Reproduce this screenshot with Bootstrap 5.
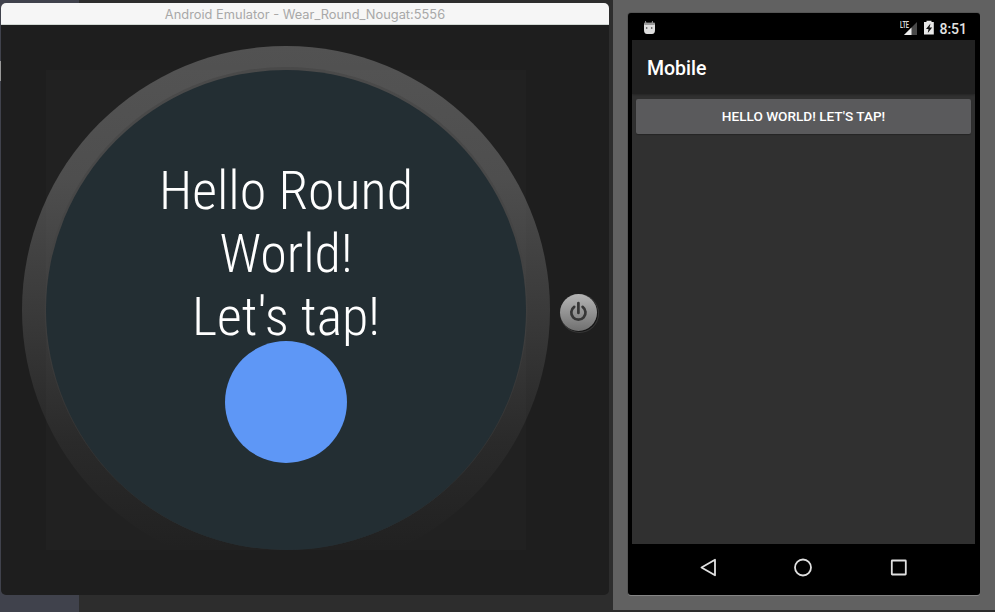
<!DOCTYPE html>
<html lang="en">
<head>
<meta charset="utf-8">
<meta name="viewport" content="width=device-width, initial-scale=1">
<title>Android Emulator - Wear_Round_Nougat:5556</title>
<link href="https://cdn.jsdelivr.net/npm/bootstrap@5.3.0/dist/css/bootstrap.min.css" rel="stylesheet">
<style>
body{width:995px;height:612px;background:linear-gradient(#999,#999) 0 61px/1px 20px no-repeat,linear-gradient(to right,#40424c 79px,#2d2d2d 79px)}
.desk{height:612px;padding-left:1px;gap:4px}
.wear-window{width:608px;height:592px;margin-top:3px;border-radius:5px;background:#1e1e1e}
.wear-title{height:22px;background:#f6f6f6;border-bottom:1px solid #d2d8d4;color:#a8a8a8;font:12.85px/23px Inter,sans-serif}
.wear-title span{display:inline-block;white-space:nowrap}
.bezel-wrap{width:528px;height:528px;margin:21px 0 0 21px}
.bezel{width:528px;height:528px;padding:24px;border-radius:50%;background:linear-gradient(#525252 0,#4c4c4c 25%,#3a3a3a 50%,#272727 75%,#1e1e1e 95%)}
.glare{top:24px;left:24px;width:480px;height:480px;background:rgba(255,255,255,.015)}
.face{z-index:1;width:480px;height:480px;border-radius:50%;background:#232e33;box-shadow:0 -1.5px 0 1.5px rgba(65,65,65,.5);padding-top:89px}
.greeting{font-family:"Roboto Condensed",Roboto,sans-serif;font-stretch:condensed;font-weight:300;font-size:54px;line-height:63px;color:#fff;white-space:nowrap;height:182px}
.dot{width:122px;height:122px;border-radius:50%;background:#5e97f6}
.power{width:37px;height:37px;margin:269px 0 0 10px;border-radius:50%;background:linear-gradient(#b5b5b5,#707070);box-shadow:1px 1px 0 #151515,1px 1px 0 1px #363636}
.stage{width:382px;height:610px;background:#616161;padding:13px 15px 0}
.phone{width:352px;height:582px;padding:0 5px 0 4px;background:#000;border-radius:3px;box-shadow:0 1px 0 #858585,-1px 0 0 #555,0 -1px 0 #555;font-family:Roboto,sans-serif}
.status{height:27px;padding:4px 8px 0 10px}
.clock{font-size:14px;font-weight:500;line-height:24px;color:#e2e2e2}
.screen{height:504px;background:#303030}
.appbar{height:54px;padding-left:15px;background:#212121;color:#fff;font-size:19.5px;font-weight:500;line-height:57px;box-shadow:0 1px 2px rgba(0,0,0,.25)}
.tap{width:335px;height:35px;margin:5px 0 0 4px;padding:0;border:0;border-radius:2px;background:#5a5a5c;color:#fff;font-size:13.6px;font-weight:500;line-height:35px;box-shadow:0 1px 1px rgba(0,0,0,.25)}
.keys{height:51px}
svg{display:block}
</style>
</head>
<body class="overflow-hidden">
<main class="desk d-flex align-items-start">
  <section class="wear-window overflow-hidden">
    <header class="wear-title text-center"><span>Android Emulator - Wear_Round_Nougat:5556</span></header>
    <div class="d-flex align-items-start">
      <div class="bezel-wrap position-relative flex-shrink-0">
        <div class="bezel">
          <div class="face position-relative d-flex flex-column align-items-center">
            <div class="greeting text-center">Hello Round<br>World!<br>Let's tap!</div>
            <div class="dot"></div>
          </div>
        </div>
        <div class="glare position-absolute"></div>
      </div>
      <div class="power flex-shrink-0" role="button" aria-label="Power">
        <svg width="37" height="37" fill="none" stroke="#363636" stroke-width="2.7"><path d="M14.2 12.9a7.1 7.1 0 1 0 8.4 0M18.4 9v10" stroke-linecap="round"/></svg>
      </div>
    </div>
  </section>
  <section class="stage flex-shrink-0">
    <div class="phone">
      <div class="status d-flex align-items-start">
        <svg width="14" height="18" class="me-auto"><path d="M3.5 4.2 4 7M10.5 4.2 10 7" stroke="#aaa" stroke-width="1"/><path d="M2 6.5h11V13q0 4-3 4H5q-3 0-3-4z" fill="#ddd"/><path d="M2.3 5.6h10.4v2.4H2.3z" fill="#999"/><circle cx="4.7" cy="11" r=".8" fill="#333"/><circle cx="9.7" cy="11" r=".8" fill="#333"/></svg>
        <svg width="19" height="20"><path d="M17 5v13H4z" fill="#484848"/><path d="M11.5 10.5V18H4z" fill="#eee"/><text x="0" y="11" font-family="Roboto" font-size="8.5" font-weight="700" fill="#ddd" textLength="9" lengthAdjust="spacingAndGlyphs">LTE</text></svg>
        <svg width="12" height="20" class="ms-1 me-1"><path d="M1 5h2.5V3.7h5V5h2.3v12.5H1z" fill="#e8e8e8"/><path d="M7.5 6.5 3 12h2.5l-.7 4 4.4-5.5H6.5z" fill="#111"/></svg>
        <span class="clock">8:51</span>
      </div>
      <div class="screen">
        <div class="appbar">Mobile</div>
        <button class="tap btn d-block" type="button">HELLO WORLD! LET'S TAP!</button>
      </div>
      <div class="keys">
        <svg width="343" height="51" fill="none" stroke="#e0e0e0" stroke-width="1.8"><path d="M83 15.7v15.6L69.5 23.5z" stroke-linejoin="round"/><circle cx="171" cy="23.5" r="8"/><rect x="259.8" y="16.5" width="14" height="14" rx=".5"/></svg>
      </div>
    </div>
  </section>
</main>
<script src="https://cdn.jsdelivr.net/npm/bootstrap@5.3.0/dist/js/bootstrap.bundle.min.js"></script>
</body>
</html>
